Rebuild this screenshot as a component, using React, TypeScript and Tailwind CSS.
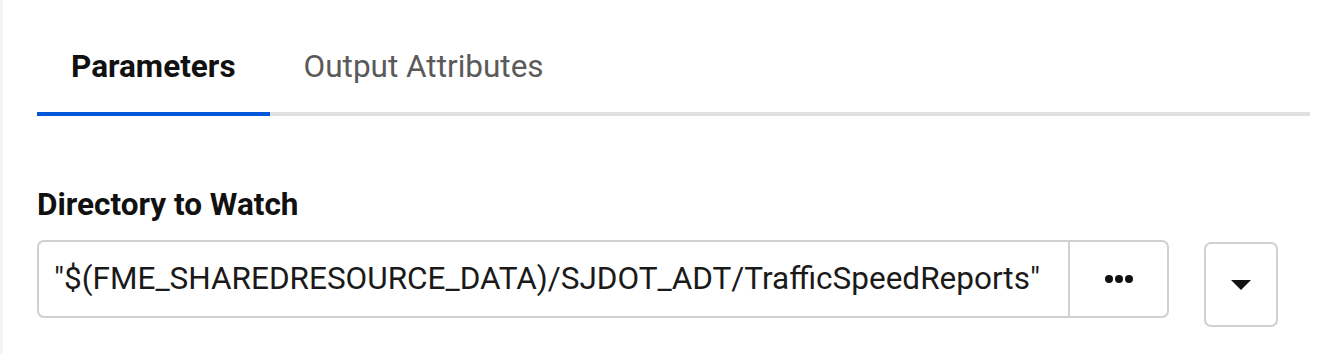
import React from "react";

export default function App() {
  return (
    <div
      className="w-[1344px] h-[354px] bg-white flex overflow-hidden"
      style={{ fontFamily: "Roboto, 'Liberation Sans', sans-serif" }}
    >
      <div className="w-[3px] h-full bg-[#f3f3f3] shrink-0" />
      <div className="flex-1 pl-[34px] pr-[34px]">
        {/* Tabs */}
        <div className="relative mt-[40px] flex">
          <div className="absolute left-0 right-0 bottom-0 h-[4px] bg-[#e0e0e0]" />
          <div className="relative px-[34px] h-[76px] pt-[9px] text-[31.5px] leading-[36px] font-bold text-[#111]">
            Parameters
            <div className="absolute left-0 right-0 bottom-0 h-[4px] bg-[#0057d9]" />
          </div>
          <div className="relative px-[34px] h-[76px] pt-[9px] text-[31.5px] leading-[36px] text-[#5a5a5a]">
            Output Attributes
          </div>
        </div>

        {/* Field */}
        <div className="mt-[71px] text-[31.5px] font-bold text-[#111] leading-[36px]">
          Directory to Watch
        </div>
        <div className="mt-[17px] flex items-start">
          <div className="w-[1132px] h-[78px] border-2 border-[#d0d0d0] rounded-[7px] flex items-stretch">
            <div className="flex-1 flex items-center pl-[15px] text-[31.5px] text-[#1a1a1a]">
              "$(FME_SHAREDRESOURCE_DATA)/SJDOT_ADT/TrafficSpeedReports"
            </div>
            <div className="w-[99px] border-l-2 border-[#d0d0d0] flex items-center justify-center gap-[2px]">
              <span className="w-[8px] h-[8px] rounded-full bg-[#111]" />
              <span className="w-[8px] h-[8px] rounded-full bg-[#111]" />
              <span className="w-[8px] h-[8px] rounded-full bg-[#111]" />
            </div>
          </div>
          <div className="ml-[35px] mt-[2px] w-[74px] h-[85px] border-2 border-[#d0d0d0] rounded-[7px] flex items-center justify-center">
            <svg width="20" height="10" viewBox="0 0 20 10">
              <path d="M0 0 L20 0 L10 10 Z" fill="#111" />
            </svg>
          </div>
        </div>
      </div>
    </div>
  );
}
